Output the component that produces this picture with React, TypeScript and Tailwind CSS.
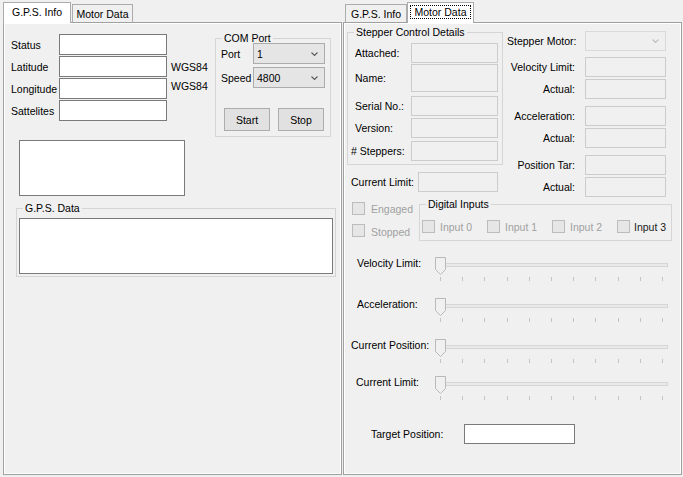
import React from "react";

function TextBox({ className = "" }: { className?: string }) {
  return <div className={`shrink-0 border border-[#7a7a7a] bg-white ${className}`} />;
}

function DisBox({ className = "" }: { className?: string }) {
  return <div className={`shrink-0 border border-[#cccccc] bg-[#f0f0f0] ${className}`} />;
}

function Chevron({ color }: { color: string }) {
  return (
    <svg width="7" height="4" viewBox="0 0 7 4" className="shrink-0">
      <path d="M0.5 0.5 L3.5 3.5 L6.5 0.5" fill="none" stroke={color} strokeWidth="1.1" />
    </svg>
  );
}

function Combo({ value, className = "" }: { value: string; className?: string }) {
  return (
    <div
      className={`flex shrink-0 items-center justify-between border border-[#acacac] bg-[#e5e5e5] pl-[3px] pr-[6px] ${className}`}
    >
      <span>{value}</span>
      <Chevron color="#5a5a5a" />
    </div>
  );
}

function DisCombo({ className = "" }: { className?: string }) {
  return (
    <div
      className={`flex shrink-0 items-center justify-end border border-[#d9d9d9] bg-[#efefef] pr-[6px] ${className}`}
    >
      <Chevron color="#bdbdbd" />
    </div>
  );
}

function Button({ children, className = "" }: { children: React.ReactNode; className?: string }) {
  return (
    <div
      className={`flex h-[23px] items-center justify-center border border-[#adadad] bg-[#e1e1e1] ${className}`}
    >
      {children}
    </div>
  );
}

function Group({
  title,
  className = "",
  children,
}: {
  title: string;
  className?: string;
  children?: React.ReactNode;
}) {
  return (
    <fieldset className={`min-w-0 shrink-0 border border-[#d5d5d5] ${className}`}>
      <legend className="ml-[6px] px-[2px] leading-[10px]">{title}</legend>
      {children}
    </fieldset>
  );
}

function Check({ label, textClass }: { label: string; textClass: string }) {
  return (
    <div className="flex items-center">
      <div className="h-[13px] w-[13px] shrink-0 border border-[#bcbcbc] bg-[#e6e6e6]" />
      <span className={textClass}>{label}</span>
    </div>
  );
}

function Slider() {
  return (
    <div className="flex w-[233px] flex-col">
      <div className="relative h-[19px] pt-[6px]">
        <div className="h-[4px] border border-[#d6d6d6] bg-[#e9e9e9]" />
        <svg className="absolute left-0 top-0" width="12" height="19" viewBox="0 0 12 19">
          <path
            d="M0.5 0.5 H10.5 V12.5 L5.5 17.5 L0.5 12.5 Z"
            fill="#f0f0f0"
            stroke="#b9b9b9"
            strokeWidth="1"
          />
        </svg>
      </div>
      <div className="mt-px flex justify-between px-[5px]">
        {Array.from({ length: 11 }).map((_, i) => (
          <div key={i} className="h-[4px] w-px bg-[#c4c4c4]" />
        ))}
      </div>
    </div>
  );
}

function GpsRow({ label, suffix, up }: { label: string; suffix?: string; up?: boolean }) {
  return (
    <div className="flex h-[21px] items-center">
      <span className="w-[48px] shrink-0">{label}</span>
      <TextBox className="h-[21px] w-[108px]" />
      {suffix && <span className={up ? "mb-[5px] ml-[4px]" : "ml-[4px]"}>{suffix}</span>}
    </div>
  );
}

function RightRow({ label, top }: { label: string; top: string }) {
  return (
    <div className={`flex items-center ${top}`}>
      <span className="w-[78px] shrink-0 pr-[10px] text-right">{label}</span>
      <DisBox className="h-[20px] w-[81px]" />
    </div>
  );
}

const panelCls =
  "flex h-[453px] flex-col border border-[#a0a0a0] bg-[#f0f0f0] shadow-[inset_1px_1px_0_#ffffff,inset_-1px_-1px_0_#ffffff]";

export default function App() {
  return (
    <div className="flex h-[477px] w-[683px] items-start overflow-hidden bg-[#f0f0f0] font-['Liberation_Sans',Arial,sans-serif] text-[10.5px] leading-[12px] text-black">
      {/* LEFT TAB CONTROL */}
      <div className="ml-[3px] flex w-[339px] flex-col">
        <div className="mt-[2px] flex h-[20px] items-end">
          <div className="z-10 -mb-px flex h-[21px] w-[68px] items-center justify-center border border-b-0 border-[#acacac] bg-white pb-[2px]">
            G.P.S. Info
          </div>
          <div className="ml-px flex h-[18px] w-[61px] items-center justify-center border border-b-0 border-[#acacac] bg-[#f0f0f0]">
            Motor Data
          </div>
        </div>
        <div className={panelCls}>
          <div className="flex items-start">
            <div className="ml-[7px] mt-[11px] flex w-[204px] shrink-0 flex-col gap-px">
              <GpsRow label="Status" />
              <GpsRow label="Latitude" suffix="WGS84" />
              <GpsRow label="Longitude" suffix="WGS84" up />
              <GpsRow label="Sattelites" />
            </div>
            <Group title="COM Port" className="mt-[10px] w-[116px] pb-[5px]">
              <div className="flex items-center">
                <span className="ml-[5px] w-[32px] shrink-0">Port</span>
                <Combo value="1" className="h-[21px] w-[72px]" />
              </div>
              <div className="mt-[3px] flex items-center">
                <span className="ml-[5px] w-[32px] shrink-0">Speed</span>
                <Combo value="4800" className="h-[21px] w-[72px]" />
              </div>
              <div className="mt-[20px] flex gap-[8px] pl-[8px]">
                <Button className="w-[46px]">Start</Button>
                <Button className="w-[46px]">Stop</Button>
              </div>
            </Group>
          </div>
          <TextBox className="ml-[15px] mt-[3px] h-[56px] w-[166px]" />
          <Group title="G.P.S. Data" className="ml-[12px] mt-[7px] w-[320px] pb-[2px]">
            <div className="flex">
              <TextBox className="ml-[2px] mt-[5px] h-[56px] w-[314px]" />
            </div>
          </Group>
        </div>
      </div>

      {/* RIGHT TAB CONTROL */}
      <div className="ml-px flex w-[339px] flex-col">
        <div className="mt-[2px] flex h-[20px] items-end pl-[2px]">
          <div className="flex h-[18px] w-[62px] items-center justify-center border border-b-0 border-[#acacac] bg-[#f0f0f0]">
            G.P.S. Info
          </div>
          <div className="z-10 -mb-px flex h-[21px] w-[67px] items-center justify-center border border-b-0 border-[#acacac] bg-white pb-[2px]">
            <span className="border border-dotted border-black px-[4px]">Motor Data</span>
          </div>
        </div>
        <div className={panelCls}>
          {/* top section */}
          <div className="flex items-start">
            <div className="ml-[3px] flex flex-col">
              <Group title="Stepper Control Details" className="mt-[4px] w-[156px] pb-[3px]">
                <div className="mt-[6px] flex items-center">
                  <span className="ml-[7px] w-[56px] shrink-0">Attached:</span>
                  <DisBox className="h-[20px] w-[87px]" />
                </div>
                <div className="mt-px flex items-center">
                  <span className="ml-[7px] w-[56px] shrink-0">Name:</span>
                  <DisBox className="h-[28px] w-[87px]" />
                </div>
                <div className="mt-[4px] flex items-center">
                  <span className="ml-[7px] w-[56px] shrink-0">Serial No.:</span>
                  <DisBox className="h-[20px] w-[87px]" />
                </div>
                <div className="mt-[2px] flex items-center">
                  <span className="ml-[7px] w-[56px] shrink-0">Version:</span>
                  <DisBox className="h-[20px] w-[87px]" />
                </div>
                <div className="mt-[3px] flex items-center">
                  <span className="ml-[3px] w-[60px] shrink-0">{"# Steppers:"}</span>
                  <DisBox className="h-[20px] w-[87px]" />
                </div>
              </Group>
              <div className="mt-[7px] flex items-center">
                <span className="ml-[4px] w-[67px] shrink-0">Current Limit:</span>
                <DisBox className="h-[20px] w-[80px]" />
              </div>
            </div>
            <div className="ml-[4px] mt-[8px] flex flex-col">
              <div className="flex items-center">
                <span className="w-[78px] shrink-0">Stepper Motor:</span>
                <DisCombo className="h-[20px] w-[81px]" />
              </div>
              <RightRow label="Velocity Limit:" top="mt-[6px]" />
              <RightRow label="Actual:" top="mt-[2px]" />
              <RightRow label="Acceleration:" top="mt-[7px]" />
              <RightRow label="Actual:" top="mt-[2px]" />
              <RightRow label="Position Tar:" top="mt-[7px]" />
              <RightRow label="Actual:" top="mt-[2px]" />
            </div>
          </div>

          {/* checkboxes + digital inputs */}
          <div className="flex items-start">
            <div className="flex w-[75px] shrink-0 flex-col pl-[8px]">
              <div className="mt-[5px]">
                <Check label="Engaged" textClass="ml-[6px] text-[#a0a0a0]" />
              </div>
              <div className="mt-[8px]">
                <Check label="Stopped" textClass="ml-[6px] mt-[3px] text-[#a0a0a0]" />
              </div>
            </div>
            <Group title="Digital Inputs" className="mt-[2px] w-[253px] pb-[7px]">
              <div className="mt-[11px] flex pl-[2px]">
                <div className="w-[65px] shrink-0">
                  <Check label="Input 0" textClass="ml-[5px] text-[#a0a0a0]" />
                </div>
                <div className="w-[65px] shrink-0">
                  <Check label="Input 1" textClass="ml-[5px] text-[#a0a0a0]" />
                </div>
                <div className="w-[65px] shrink-0">
                  <Check label="Input 2" textClass="ml-[5px] text-[#a0a0a0]" />
                </div>
                <div className="shrink-0">
                  <Check label="Input 3" textClass="ml-[4px] text-[#1a1a1a]" />
                </div>
              </div>
            </Group>
          </div>

          {/* sliders */}
          <div className="mt-[16px] flex items-start">
            <span className="ml-[13px] w-[78px] shrink-0">Velocity Limit:</span>
            <Slider />
          </div>
          <div className="mt-[17px] flex items-start">
            <span className="ml-[13px] w-[78px] shrink-0">Acceleration:</span>
            <Slider />
          </div>
          <div className="mt-[17px] flex items-start">
            <span className="ml-[7px] w-[84px] shrink-0">Current Position:</span>
            <Slider />
          </div>
          <div className="mt-[13px] flex items-start">
            <span className="ml-[12px] w-[79px] shrink-0">Current Limit:</span>
            <Slider />
          </div>

          {/* target position */}
          <div className="mt-[24px] flex items-center">
            <span className="ml-[27px] w-[93px] shrink-0">Target Position:</span>
            <TextBox className="h-[20px] w-[111px]" />
          </div>
        </div>
      </div>
    </div>
  );
}
